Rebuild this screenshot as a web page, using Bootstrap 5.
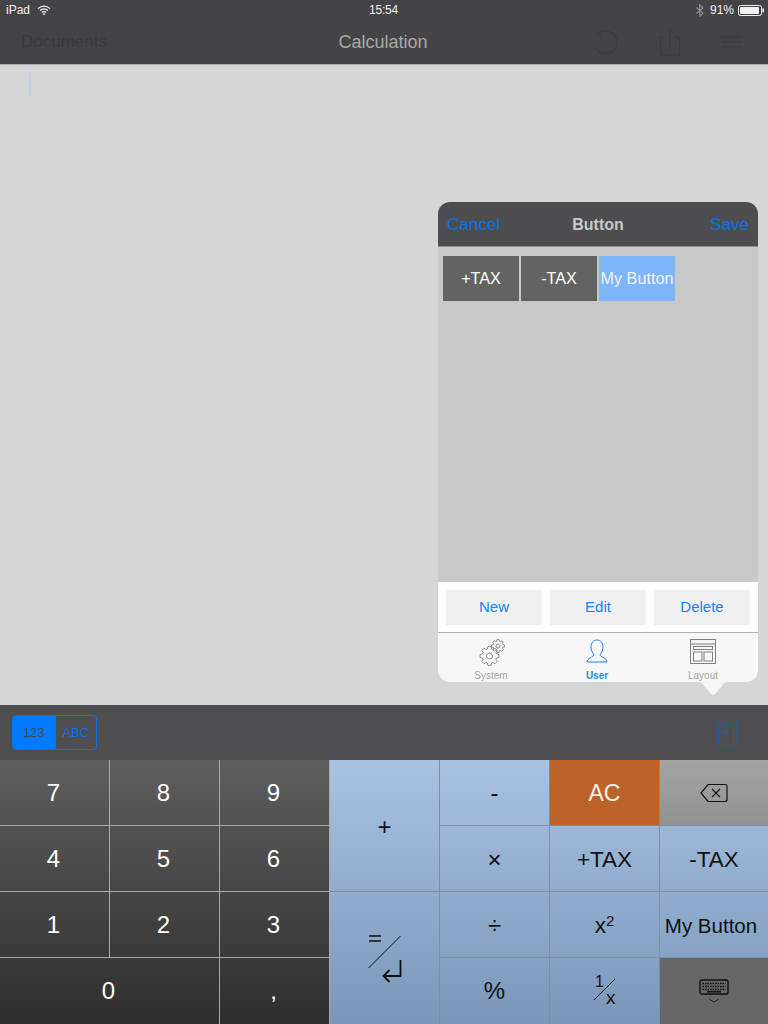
<!DOCTYPE html>
<html lang="en">
<head>
  <meta charset="UTF-8">
  <meta name="viewport" content="width=device-width, initial-scale=1.0">
  <title>Calculation</title>
  <link href="https://cdn.jsdelivr.net/npm/bootstrap@5.3.0/dist/css/bootstrap.min.css" rel="stylesheet">
  <style>
    html, body { height: 100%; }
    body {
      font-family: "Liberation Sans", Arial, sans-serif;
      background-color: #d5d7d6;
      overflow: hidden;
    }
    .app-screen { width: 768px; height: 1024px; position: relative; }
    .top-bars { height: 65px; background: #444446; border-bottom: 1px solid #a9abaa; }
    .status-row { height: 20px; padding: 0 3px 0 6px; color: #f2f2f2; font-size: 12px; }
    .status-time { width: 60px; text-align: center; letter-spacing: -.2px; }
    .status-side { width: 200px; }
    .status-left { width: 196px; gap: 7px; }
    .bt-gap { margin-right: 6px; }
    .nav-row { height: 44px; padding: 0 27px 0 21px; }
    .nav-docs { width: 204px; color: #39393b; font-size: 17px; }
    .nav-title { color: #a8a8a8; font-size: 18px; }
    .nav-tools { width: 200px; gap: 42px; }
    .editor { height: 640px; padding: 8px 29px; }
    .caret-line { width: 2px; height: 24px; background: #c0d0e2; }
    .tool-strip { height: 55px; background: #4e4e50; padding: 10px 30px 10px 12px; }
    .mode-switch { width: 85px; height: 35px; border: 1px solid #0a74e6; border-radius: 4px; overflow: hidden; font-size: 13px; }
    .mode-switch span { width: 42px; line-height: 33px; text-align: center; color: #0a74e6; }
    .mode-switch .mode-on { width: 42px; background: #007aff; color: #3e4a5c; }
    .mode-switch .mode-off { border-left: 1px solid #0a74e6; }
    .keypad { height: 264px; }
    .pad-dark {
      width: 330px;
      display: grid;
      grid-template-columns: 110px 110px 110px;
      grid-auto-rows: 66px;
      background: linear-gradient(#5e5e5e, #2e2e2e);
      color: #fff;
    }
    .pad-blue {
      width: 438px;
      display: grid;
      grid-template-columns: 110px 110px 110px 108px;
      grid-auto-rows: 66px;
      background: linear-gradient(#a8c2e2, #7a97ba);
      color: #111;
    }
    .calc-key {
      display: flex;
      align-items: center;
      justify-content: center;
      font-size: 24px;
      border-right: 1px solid #a9a9a9;
      border-bottom: 1px solid #a9a9a9;
    }
    .pad-dark .calc-key { padding-right: 2px; }
    .pad-blue .calc-key { border-color: #7d8ea4; }
    .calc-key.no-right { border-right: 0; }
    .calc-key.no-bottom { border-bottom: 0; }
    .calc-key.key-low { padding-top: 3px; }
    .span-two-col { grid-column: span 2; }
    .key-plus { grid-area: 1 / 1 / 3 / 2; }
    .key-equals { grid-area: 3 / 1 / 5 / 2; border-bottom: 0; }
    .key-ac { background: #bd632a; color: #f4efe9; font-size: 23px; padding-top: 2px; }
    .key-back { background: linear-gradient(#a4a4a4, #929292); }
    .key-kbd { background: #676767; padding-top: 1px; }
    .key-name { font-size: 22.5px; white-space: nowrap; }
    .key-mine { font-size: 20.5px; padding-right: 6px; white-space: nowrap; }
    .sup-text { font-size: 15px; position: relative; top: -5px; }
    .popover-panel {
      position: absolute;
      left: 438px;
      top: 202px;
      width: 320px;
      height: 480px;
    }
    .panel-head {
      height: 45px;
      background: #4d4d4f;
      border-bottom: 1px solid #8d8d8d;
      border-radius: 12px 12px 0 0;
      padding: 2px 9px 0 9px;
      font-size: 17px;
      color: #0a74e6;
    }
    .head-side { flex: 1 1 0; }
    .panel-title { color: #c9c9c9; font-weight: 700; font-size: 16px; }
    .panel-body { height: 335px; background: #c8c8c8; padding: 9px 5px; gap: 2px; }
    .user-btn { width: 76px; height: 45px; background: #636363; color: #fff; font-size: 16.2px; line-height: 45px; text-align: center; white-space: nowrap; }
    .user-btn.picked { background: #7db5f9; color: #eef4fb; }
    .panel-actions { height: 51px; background: #fff; padding: 8px; gap: 8px; border-bottom: 1px solid #b0b0b0; }
    .act-btn { width: 96px; height: 35px; background: #f0f0f0; color: #1a82fb; font-size: 15px; line-height: 33px; text-align: center; }
    .panel-tabs { height: 49px; background: #f7f7f7; border-radius: 0 0 12px 12px; padding: 6px 2px 0 0; }
    .tab-item { width: 106px; font-size: 10px; color: #a5a5a5; text-align: center; line-height: 11px; }
    .tab-item svg { display: block; margin: 0 auto 4px; }
    .tab-item.active { color: #2a86f5; font-weight: 700; }
    .panel-tip {
      position: absolute;
      left: 259px;
      top: 480px;
      width: 32px;
      height: 13px;
    }
  </style>
</head>
<body>
  <div class="app-screen">
    <div class="top-bars">
      <div class="status-row d-flex align-items-center justify-content-between">
        <div class="status-left d-flex align-items-center">
          <span>iPad</span>
          <svg width="14" height="11" viewBox="0 0 14 11" fill="none" stroke="#f2f2f2" stroke-width="1.3"><path d="M1 3.6C4.5.3 9.5.3 13 3.6M3 5.6c2.4-2.1 5.6-2.1 8 0M5 7.5c1.2-1 2.8-1 4 0"/><path d="M5.7 8.9L7 10.3 8.300 8.900C7.500 8.300 6.500 8.300 5.700 8.900z" fill="#f2f2f2" stroke="none"/></svg>
        </div>
        <div class="status-time">15:54</div>
        <div class="status-side d-flex align-items-center justify-content-end">
          <svg class="bt-gap" width="8" height="13" viewBox="0 0 8 13" fill="none" stroke="#8f8f8f" stroke-width="1.100"><path d="M.5 3.500L7 9 3.800 12.300V.7L7 4 .5 9.500"/></svg>
          <span class="me-1">91%</span>
          <svg width="27" height="11" viewBox="0 0 27 11"><rect x=".5" y=".5" width="23" height="10" rx="2" fill="none" stroke="#f2f2f2"/><rect x="2" y="2" width="19" height="7" rx="1" fill="#f2f2f2"/><rect x="24.500" y="3.500" width="1.500" height="4" fill="#f2f2f2"/></svg>
        </div>
      </div>
      <div class="nav-row d-flex align-items-center justify-content-between">
        <div class="nav-docs">Documents</div>
        <div class="nav-title">Calculation</div>
        <div class="nav-tools d-flex align-items-center justify-content-end">
          <svg width="26" height="26" viewBox="0 0 26 26" fill="none" stroke="#3b3b3d" stroke-width="1"><path d="M5 5.500A11.500 11.500 0 1 1 3 18M5 1v5h5"/></svg>
          <svg width="20" height="28" viewBox="0 0 20 28" fill="none" stroke="#3b3b3d" stroke-width="1"><path d="M6 9H.5v18h19V9H14M10 18V1M6 5l4-4 4 4"/></svg>
          <svg width="19" height="12" viewBox="0 0 19 12" fill="none" stroke="#3b3b3d" stroke-width="1"><path d="M0 1h19M0 6h19M0 11h19"/></svg>
        </div>
      </div>
    </div>

    <div class="editor"><div class="caret-line"></div></div>

    <div class="tool-strip d-flex align-items-center justify-content-between">
      <div class="mode-switch d-flex">
        <span class="mode-on">123</span>
        <span class="mode-off">ABC</span>
      </div>
      <svg width="20" height="26" viewBox="0 0 20 26" fill="none" stroke="#1c5fa8" stroke-width="1"><path d="M3.500 1.500h15.500v21"/><rect x=".5" y="4" width="15" height="21.500"/><path d="M7.500 10v5M5 12.500h5"/></svg>
    </div>

    <div class="keypad d-flex">
      <div class="pad-dark">
        <div class="calc-key">7</div><div class="calc-key">8</div><div class="calc-key">9</div>
        <div class="calc-key">4</div><div class="calc-key">5</div><div class="calc-key">6</div>
        <div class="calc-key">1</div><div class="calc-key">2</div><div class="calc-key">3</div>
        <div class="calc-key span-two-col no-bottom">0</div><div class="calc-key no-bottom">,</div>
      </div>
      <div class="pad-blue">
        <div class="calc-key key-plus key-low">+</div>
        <div class="calc-key">-</div>
        <div class="calc-key key-ac">AC</div>
        <div class="calc-key key-back no-right">
          <svg width="28" height="20" viewBox="0 0 28 20" fill="none" stroke="#111" stroke-width="1.200"><path d="M8 1.500h17a2 2 0 0 1 2 2v13a2 2 0 0 1-2 2H8L1 10z"/><path d="M12 6l8 8M20 6l-8 8"/></svg>
        </div>
        <div class="calc-key key-low">×</div>
        <div class="calc-key key-name key-low">+TAX</div>
        <div class="calc-key key-name key-low no-right">-TAX</div>
        <div class="calc-key key-equals">
          <svg width="36" height="54" viewBox="0 0 36 54" fill="none" stroke="#111" stroke-width="1"><path d="M2 5h12M2 10h12" stroke-width="1.500"/><path d="M33.500 5L1.500 37"/><path d="M33.500 29v16H16.500M22.500 39l-6 6 6 6" stroke-width="1.800"/></svg>
        </div>
        <div class="calc-key key-low">÷</div>
        <div class="calc-key key-name key-low">x<span class="sup-text">2</span></div>
        <div class="calc-key key-mine key-low no-right">My Button</div>
        <div class="calc-key no-bottom">%</div>
        <div class="calc-key no-bottom">
          <svg width="30" height="36" viewBox="0 0 30 36" stroke="#111" fill="none"><path d="M25 6L4 27"/><text x="5" y="14" font-size="16" fill="#111" stroke="none" font-family="Liberation Sans">1</text><text x="16" y="31" font-size="19" fill="#111" stroke="none" font-family="Liberation Sans">x</text></svg>
        </div>
        <div class="calc-key key-kbd no-right no-bottom">
          <svg width="30" height="26" viewBox="0 0 30 26"><rect x="1" y="1" width="28" height="14" rx="1.500" fill="none" stroke="#111" stroke-width="1.400"/><path d="M3.500 4.500h23M3.500 7.500h23M3.500 10.500h23" stroke="#111" stroke-width="1.600" stroke-dasharray="1.600 .9"/><path d="M8 12.800h14" stroke="#111" stroke-width="1.500"/><path d="M10 20l5 3 5-3" fill="none" stroke="#222"/></svg>
        </div>
      </div>
    </div>

    <div class="popover-panel">
      <div class="panel-head d-flex align-items-center">
        <span class="head-side">Cancel</span>
        <span class="panel-title">Button</span>
        <span class="head-side text-end">Save</span>
      </div>
      <div class="panel-body d-flex align-items-start">
        <div class="user-btn">+TAX</div>
        <div class="user-btn">-TAX</div>
        <div class="user-btn picked">My Button</div>
      </div>
      <div class="panel-actions d-flex">
        <div class="act-btn">New</div>
        <div class="act-btn">Edit</div>
        <div class="act-btn">Delete</div>
      </div>
      <div class="panel-tabs d-flex justify-content-between">
        <div class="tab-item">
          <svg width="27" height="27" viewBox="0 0 27 27" fill="none" stroke="#808080" stroke-width=".9"><path class="gear-shape" data-cx="11.500" data-cy="17" data-big="9.500" data-low="7.300"/><circle cx="11.500" cy="17" r="3"/><path class="gear-shape" data-cx="20" data-cy="7" data-big="6.500" data-low="4.900"/><circle cx="20" cy="7" r="2"/></svg>
          System
        </div>
        <div class="tab-item active">
          <svg width="22" height="27" viewBox="0 0 22 27" fill="none" stroke="#1a82fb" stroke-width="1"><path d="M1 23h20c0-4-6-4.500-7-7 2-3 3-5 3-8 0-4-2.500-7-6-7S5 4 5 8c0 3 1 5 3 8-1 2.500-7 3-7 7z"/></svg>
          User
        </div>
        <div class="tab-item">
          <svg width="26" height="27" viewBox="0 0 26 27" fill="none" stroke="#808080"><rect x=".5" y=".5" width="25" height="24"/><path d="M.5 5h25"/><rect x="3.500" y="7.500" width="19" height="3"/><rect x="3.500" y="13" width="8.500" height="9"/><rect x="14" y="13" width="8.500" height="9"/></svg>
          Layout
        </div>
      </div>
      <svg class="panel-tip" viewBox="0 0 32 13"><path d="M0 0h32c-5 0-6 2-8 5l-6 7c-1 1-3 1-4 0L8 5C6 2 5 0 0 0z" fill="#f7f7f7"/></svg>
    </div>
  </div>
  <script src="https://cdn.jsdelivr.net/npm/bootstrap@5.3.0/dist/js/bootstrap.bundle.min.js"></script>
  <script>
    // gear outlines for the System tab, 8 teeth each
    document.querySelectorAll(".gear-shape").forEach(g => {
      const cx = +g.dataset.cx, cy = +g.dataset.cy, big = +g.dataset.big, low = +g.dataset.low;
      let d = "";
      for (let i = 0; i < 8; i++) {
        const a = i * Math.PI / 4;
        [[-0.3, low], [-0.17, big], [0.17, big], [0.3, low]].forEach(([o, r]) => {
          d += (d ? "L" : "M") + (cx + r * Math.cos(a + o)).toFixed(2) + " " + (cy + r * Math.sin(a + o)).toFixed(2);
        });
      }
      g.setAttribute("d", d + "z");
    });
  </script>
</body>
</html>
